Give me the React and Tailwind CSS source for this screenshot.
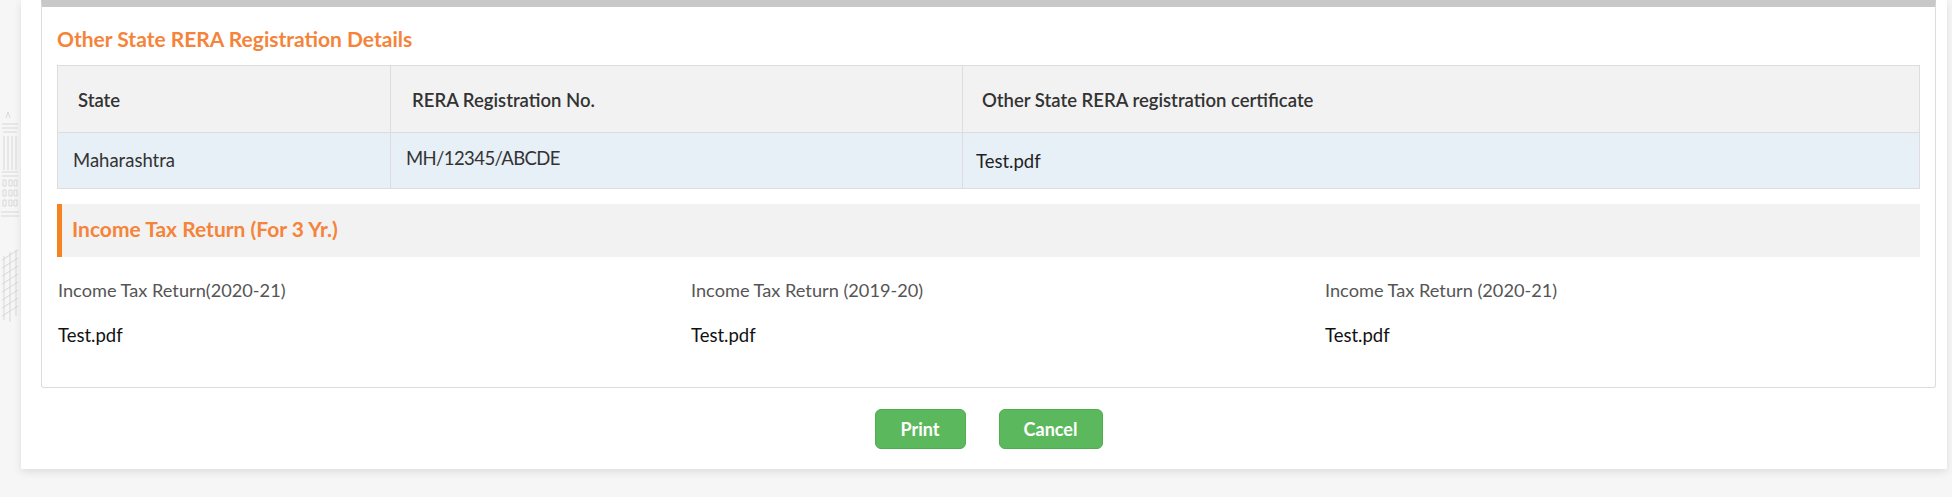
import React from "react";

const rera = [
  { state: "Maharashtra", reg: "MH/12345/ABCDE", file: "Test.pdf" },
];

const itr = [
  { label: "Income Tax Return(2020-21)", file: "Test.pdf" },
  { label: "Income Tax Return (2019-20)", file: "Test.pdf" },
  { label: "Income Tax Return (2020-21)", file: "Test.pdf" },
];

function BuildingSketch() {
  // faint line drawing of a heritage building peeking from the page background
  return (
    <svg
      className="absolute left-0 top-[110px]"
      width="20"
      height="240"
      viewBox="0 0 20 240"
      fill="none"
      stroke="#d2d2d2"
      strokeWidth="0.8"
    >
      <path d="M6 8 L8 2 L10 8" />
      <path d="M2 14 H18 M2 18 H18 M3 22 H17" />
      <path d="M4 26 V60 M8 26 V60 M12 26 V60 M16 26 V60" />
      <path d="M2 62 H18 M2 66 H18" />
      <path d="M3 70 h3 v6 h-3z M9 70 h3 v6 h-3z M14 70 h3 v6 h-3z" />
      <path d="M3 80 h3 v6 h-3z M9 80 h3 v6 h-3z M14 80 h3 v6 h-3z" />
      <path d="M3 90 h3 v6 h-3z M9 90 h3 v6 h-3z M14 90 h3 v6 h-3z" />
      <path d="M1 102 H19 M1 106 H19" />
      <path d="M2 150 L18 140 M2 158 L18 148 M2 166 L18 156 M2 174 L18 164 M2 182 L18 172 M2 190 L18 180 M2 198 L18 188 M2 206 L18 196" />
      <path d="M4 146 V210 M10 142 V212 M16 140 V206" />
    </svg>
  );
}

export default function App() {
  return (
    <div
      className="relative min-h-[497px] overflow-hidden bg-[#f6f6f6] text-[#333]"
      style={{ fontFamily: "Lato, 'Open Sans', 'Liberation Sans', sans-serif" }}
    >
      <BuildingSketch />
      <div className="relative ml-[21px] w-[1926px] bg-white pb-[20px] shadow-[0_3px_8px_rgba(0,0,0,0.10)]">
        <div className="ml-[20px] w-[1895px] rounded-b-[3px] border border-t-[7px] border-[#dcdcdc] border-t-[#c8c8c8] px-[15px] pb-[40px]">
          <h3 className="pt-[20px] text-[21px] font-bold leading-[24px] text-[#f5843a]">
            Other State RERA Registration Details
          </h3>

          <table className="mt-[14px] w-full border-collapse border border-[#dddddd] text-[18.5px]">
            <thead>
              <tr className="h-[67px] bg-[#f2f2f2]">
                <th className="w-[333px] border border-[#dddddd] pl-[20px] pt-[3px] text-left font-semibold text-[#333]">
                  State
                </th>
                <th className="w-[572px] border border-[#dddddd] pl-[21px] pt-[3px] text-left font-semibold text-[#333]">
                  RERA Registration No.
                </th>
                <th className="border border-[#dddddd] pl-[19px] pt-[3px] text-left font-semibold text-[#333]">
                  Other State RERA registration certificate
                </th>
              </tr>
            </thead>
            <tbody>
              {rera.map((r) => (
                <tr key={r.reg} className="h-[56px] bg-[#e7eff7] text-[18.5px]">
                  <td className="border border-[#dddddd] pl-[15px] text-[#333]">{r.state}</td>
                  <td className="border border-[#dddddd] pl-[15px] pb-[4px] tracking-[-0.6px] text-[#333]">
                    {r.reg}
                  </td>
                  <td className="border border-[#dddddd] pl-[13px] pt-[2px] text-[#222]">{r.file}</td>
                </tr>
              ))}
            </tbody>
          </table>

          <div className="mt-[15px] flex h-[53px] items-center border-l-[5px] border-[#f7821f] bg-[#f2f2f2] pl-[10px] pb-[3px]">
            <span className="text-[21px] font-bold text-[#f5843a]">Income Tax Return (For 3 Yr.)</span>
          </div>

          <div className="grid grid-cols-[633px_634px_1fr] pt-[21px] pl-[1px]">
            {itr.map((it, i) => (
              <div key={i} className="flex flex-col gap-[21px]">
                <span className="text-[18.2px] leading-[24px] text-[#555]">{it.label}</span>
                <span className="text-[18.5px] leading-[24px] text-[#111]">{it.file}</span>
              </div>
            ))}
          </div>
        </div>

        <div className="ml-[20px] mt-[21px] flex w-[1895px] justify-center gap-[33px]">
          <button className="h-[40px] w-[91px] rounded-[6px] border border-[#4cae4c] bg-[#5cb85c] text-[18px] font-bold text-white">
            Print
          </button>
          <button className="h-[40px] w-[104px] rounded-[6px] border border-[#4cae4c] bg-[#5cb85c] text-[18px] font-bold text-white">
            Cancel
          </button>
        </div>
      </div>
    </div>
  );
}
